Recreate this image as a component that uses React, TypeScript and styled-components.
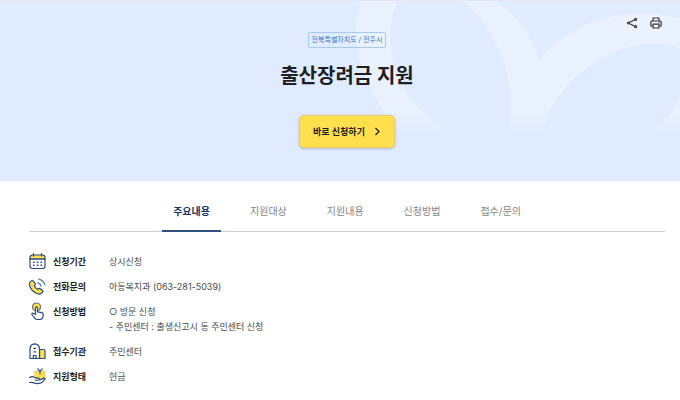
import React, { useState } from "react";
import styled, { createGlobalStyle } from "styled-components";

const navy = "#2b4c82";
const yellow = "#ffdf4d";

const GlobalStyle = createGlobalStyle`
  *, *::before, *::after { box-sizing: border-box; }
  body {
    margin: 0;
    background: #fff;
    color: #1d1f22;
    font-family: Inter, "Noto Sans CJK KR", sans-serif;
    font-size: 9px;
  }
  button { font-family: inherit; cursor: pointer; }
  h1, dl, dt, dd { margin: 0; }
`;

const Hero = styled.header`
  position: relative;
  display: flex;
  flex-direction: column;
  align-items: center;
  padding: 31px 15px 33px 29px;
  background: #e0ebff;
  border-top: 1px solid #e3e6f0;
`;

const HeroRings = styled.svg`
  position: absolute;
  top: 0;
  right: 0;
  width: 340px;
  height: 140px;
`;

const Tools = styled.div`
  position: absolute;
  top: 13px;
  right: 15px;
  display: flex;
  gap: 6px;
`;

const ToolButton = styled.button`
  display: grid;
  place-items: center;
  width: 18px;
  height: 18px;
  padding: 0;
  border: 0;
  border-radius: 50%;
  background: #edf2fb;
  color: #303338;
`;

const Region = styled.span`
  position: relative;
  padding: 0 3px;
  border: 1px solid #a9c8ee;
  border-radius: 2px;
  color: #3f78c0;
  font-size: 7px;
  line-height: 14px;
`;

const Title = styled.h1`
  position: relative;
  margin-top: 13px;
  font-size: 20px;
  font-weight: 700;
  line-height: 30px;
`;

const ApplyButton = styled.button`
  position: relative;
  display: flex;
  align-items: center;
  gap: 8px;
  height: 33px;
  margin-top: 24px;
  padding: 0 13px;
  border: 1px solid #e6cf68;
  border-radius: 5px;
  background: ${yellow};
  box-shadow: 0 1px 3px rgba(60, 70, 100, 0.3);
  color: #211f14;
  font-size: 9px;
  font-weight: 700;
`;

const Content = styled.main`
  padding: 9px 15px 16px 29px;
`;

const Tabs = styled.div`
  display: flex;
  justify-content: center;
  gap: 18px;
  border-bottom: 1px solid #cfd0d2;
`;

const Tab = styled.button<{ $active: boolean }>`
  height: 42px;
  margin-bottom: -1px;
  padding: 0 11px;
  border: 0;
  border-bottom: 2px solid ${(p) => (p.$active ? "#334f80" : "transparent")};
  background: none;
  color: ${(p) => (p.$active ? "#173765" : "#858585")};
  font-size: 10px;
  font-weight: ${(p) => (p.$active ? 700 : 400)};
`;

const Details = styled.dl`
  display: grid;
  gap: 10px;
  padding-top: 22px;
  line-height: 15px;
`;

const DetailRow = styled.div`
  display: grid;
  grid-template-columns: 80px 1fr;
`;

const Term = styled.dt`
  display: flex;
  align-items: center;
  gap: 7px;
  height: 15px;
  font-weight: 700;
`;

const Value = styled.dd`
  color: #484b50;
  white-space: pre-line;
`;

const Rings = () => (
  <HeroRings viewBox="340 0 340 140" aria-hidden="true">
    <defs>
      <linearGradient id="ringFade" gradientUnits="userSpaceOnUse" x1="0" y1="0" x2="0" y2="136">
        <stop offset="0" stopColor="#e9f1ff" />
        <stop offset="0.82" stopColor="#e9f1ff" />
        <stop offset="1" stopColor="#e0ebff" />
      </linearGradient>
    </defs>
    <path
      fill="url(#ringFade)"
      d="M361 0C349 38 358 85 405 136H463C414 120 374 62 397 0H463C490 22 525 80 505 136H542C548 90 600 44 650 43C664 43 674 45 680 47V17C625 5 572 18 540 59C531 34 517 14 495 0Z"
    />
    <path fill="url(#ringFade)" d="M680 96C674 112 662 125 645 136H680Z" />
  </HeroRings>
);

const ShareIcon = () => (
  <svg width="12" height="12" viewBox="0 0 12 12" fill="none" stroke="currentColor" strokeWidth="1.1" aria-hidden="true">
    <path d="M3.3 5.5 8.7 2.7M3.3 6.5l5.4 2.8" />
    <circle cx="2.4" cy="6" r="1" />
    <circle cx="9.6" cy="2.4" r="1" />
    <circle cx="9.6" cy="9.6" r="1" />
  </svg>
);

const PrintIcon = () => (
  <svg width="12" height="12" viewBox="0 0 12 12" fill="none" stroke="currentColor" strokeWidth="1.2" strokeLinejoin="round" aria-hidden="true">
    <path d="M3 4V1h6v3M3 9H.8V5Q.8 4 1.8 4h8.4q1 0 1 1v4H9M3 7.2h6V11H3z" />
    <path d="M8.6 5.6h1" />
  </svg>
);

const ArrowIcon = () => (
  <svg width="8" height="9" viewBox="0 0 8 9" fill="none" stroke="currentColor" strokeWidth="1.2" aria-hidden="true">
    <path d="m2.5 1 3.5 3.5L2.5 8" />
  </svg>
);

const Glyph = styled.svg`
  flex: none;
  width: 17px;
  height: 17px;
  overflow: visible;
  fill: none;
  stroke: ${navy};
  stroke-width: 1.2;
  stroke-linecap: round;
  stroke-linejoin: round;
`;

const CalendarIcon = () => (
  <Glyph viewBox="0 0 17 17" aria-hidden="true">
    <path d="M1 6V4.500Q1 2 3.500 2h10q2.500 0 2.500 2.500V6z" fill={yellow} />
    <path d="M1 6h15v7q0 2.500-2.500 2.500h-10Q1 15.500 1 13zM4.500.5v2.500M12.500.5v2.500" />
    <path d="M4.5 9.2h.5M8.300 9.200h.5M12 9.200h.5M4.500 12.200h.5M8.300 12.200h.5M12 12.200h.5" strokeWidth="1.5" />
  </Glyph>
);

const PhoneIcon = () => (
  <Glyph viewBox="0 0 17 17" aria-hidden="true">
    <path
      fill={yellow}
      d="M.9 4.200C1.600 2.800 3.300 2.200 4.300 3.200L6.100 5.300C6.700 6.200 6.300 7 5.300 7.800 5.900 9.500 7 10.600 8.600 11.300 9.500 10.300 10.400 10.100 11.200 10.700L13.500 12.500C14.300 13.400 13.600 14.700 12.300 15.500 10.700 16.400 8.500 16.100 6.300 14.700 3.400 12.900 1.300 10.200.6 7.300.3 6 .4 5.100.9 4.200Z"
    />
    <path d="M8.600 4.800q2.800.5 3.500 3.300M9.600 1.200q5 .9 6.200 5.600" stroke="#5a7bad" />
  </Glyph>
);

const TouchIcon = () => (
  <Glyph viewBox="0 0 17 17" aria-hidden="true">
    <circle cx="7.5" cy="4" r="4" fill={yellow} stroke="#5c6f72" />
    <path
      fill="#fff"
      d="M6.500 11V5q0-1.100 1-1.100t1 1.100v3.800l4.500.8q1.500.4 1.300 2l-.5 2.600q-.4 2.300-2.700 2.300H8.200q-1.500 0-2.300-1.200L2.900 11.500q-.3-1.100.8-1.300 1 0 2.800 1.400z"
    />
  </Glyph>
);

const BuildingIcon = () => (
  <Glyph viewBox="0 0 17 17" aria-hidden="true">
    <path d="M10.5 6.500h4.200q1.300 0 1.300 1.300v7.700h-5.500z" fill={yellow} />
    <path d="M1 15.500V6Q1.200 1 5.700.8 10.300 1 10.500 6v9.500z" fill="#fff" />
    <path d="M4.300 15.300v-2.800h2.800v2.800M4.900 5.400h1.700M4.900 8.900h1.700" />
  </Glyph>
);

const GiftIcon = () => (
  <Glyph viewBox="0 0 17 17" aria-hidden="true">
    <path d="M6.200 3.500h9.600v6.800l-3.300 1.200-6.300-2.300z" fill={yellow} stroke="#dfbd3c" strokeWidth="0.8" />
    <path d="M11 3.600v2.200M8.700.8 11 3.200 13.200.8" />
    <path d="M.6 9.500q2.600-1.800 4.600-.3 1.400 1 4.200.8 1.300.2 1 1.500-.5.900-3.800.7M10.800 12l4-1.900q1.400-.3 1.300.9-1.400 2.600-4.600 4.200-3.800 1-6.500-.3-1.800-.8-4.400-.4" />
  </Glyph>
);

const tabs = ["주요내용", "지원대상", "지원내용", "신청방법", "접수/문의"];

const details = [
  { Icon: CalendarIcon, term: "신청기간", value: "상시신청" },
  { Icon: PhoneIcon, term: "전화문의", value: "아동복지과 (063-281-5039)" },
  { Icon: TouchIcon, term: "신청방법", value: "○ 방문 신청\n- 주민센터 : 출생신고시 동 주민센터 신청" },
  { Icon: BuildingIcon, term: "접수기관", value: "주민센터" },
  { Icon: GiftIcon, term: "지원형태", value: "현금" },
];

export default function App() {
  const [active, setActive] = useState(0);
  return (
    <>
      <GlobalStyle />
      <Hero lang="ko">
        <Rings />
        <Region>전북특별자치도 / 전주시</Region>
        <Title>출산장려금 지원</Title>
        <ApplyButton type="button">
          바로 신청하기
          <ArrowIcon />
        </ApplyButton>
        <Tools>
          <ToolButton type="button" aria-label="공유">
            <ShareIcon />
          </ToolButton>
          <ToolButton type="button" aria-label="인쇄">
            <PrintIcon />
          </ToolButton>
        </Tools>
      </Hero>
      <Content lang="ko">
        <Tabs role="tablist">
          {tabs.map((label, i) => (
            <Tab
              key={label}
              type="button"
              role="tab"
              aria-selected={i === active}
              $active={i === active}
              onClick={() => setActive(i)}
            >
              {label}
            </Tab>
          ))}
        </Tabs>
        <Details>
          {details.map(({ Icon, term, value }) => (
            <DetailRow key={term}>
              <Term>
                <Icon />
                {term}
              </Term>
              <Value>{value}</Value>
            </DetailRow>
          ))}
        </Details>
      </Content>
    </>
  );
}
